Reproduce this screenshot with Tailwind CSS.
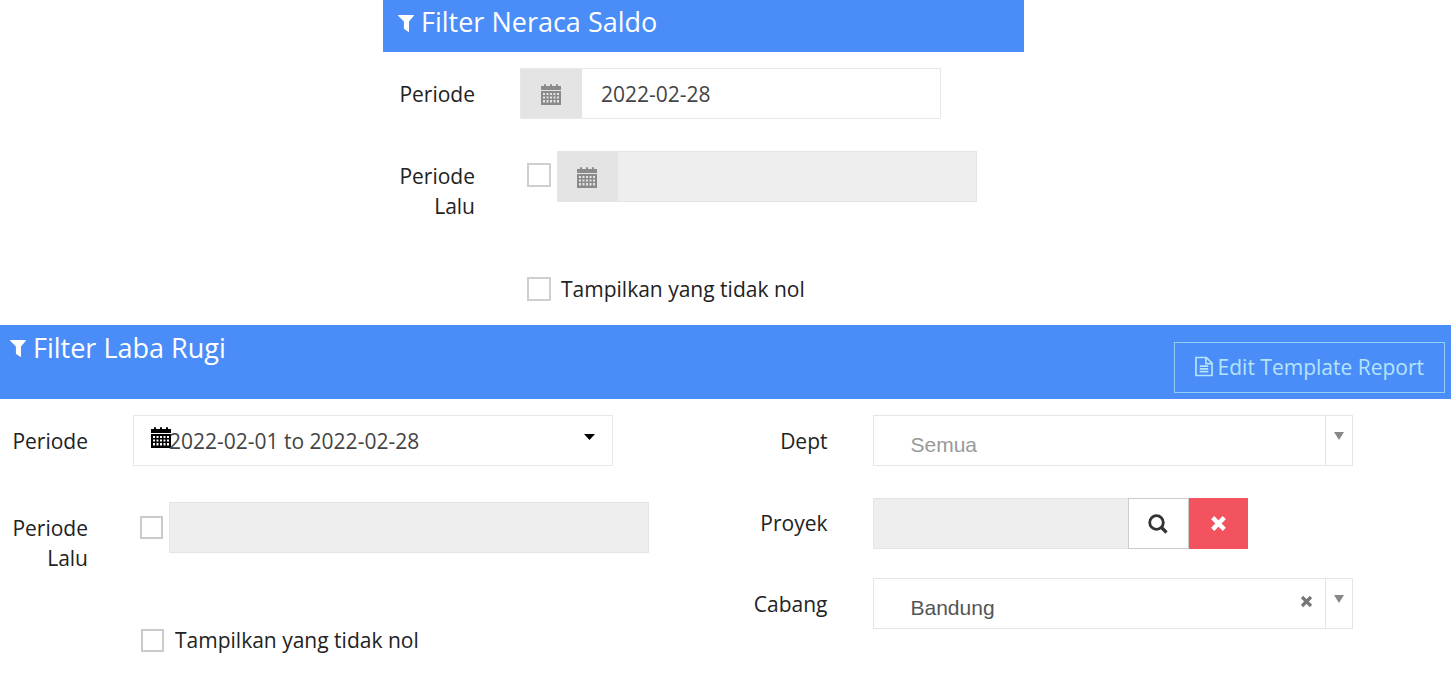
<!DOCTYPE html>
<html lang="id">
<head>
<meta charset="utf-8">
<meta name="viewport" content="width=device-width, initial-scale=1">
<title>Filter Laporan</title>
<script src="https://cdn.jsdelivr.net/npm/@tailwindcss/browser@4"></script>
</head>
<body class="bg-white font-['Open_Sans',sans-serif] text-[21px] leading-[30px] text-[#222]">
<svg class="hidden" aria-hidden="true">
  <symbol id="funnel" viewBox="0 0 16 17"><path d="M.3 0h15.4c.4 0 .5.5.2.8L11 6.500v10c0 .5-.5.6-.8.3l-4-2.900c-.2-.2-.3-.4-.3-.7V6.500L.1.8C-.2.5-.1 0 .3 0z" fill="currentColor"/></symbol>
  <symbol id="calendar" viewBox="0 0 20 21"><path fill="currentColor" fill-rule="evenodd" d="M0 2h3V1q0-1 1-1t1 1v1h4V1q0-1 1-1t1 1v1h4V1q0-1 1-1t1 1v1h3v4H0zM0 7h20v14H0zM2 9v2h2V9zm3.500 0v2h2V9zM9 9v2h2V9zm3.500 0v2h2V9zM16 9v2h2V9zM2 12.500v2h2v-2zm3.500 0v2h2v-2zm3.500 0v2h2v-2zm3.500 0v2h2v-2zm3.500 0v2h2v-2zM2 16v2.500h2V16zm3.500 0v2.500h2V16zM9 16v2.500h2V16zm3.500 0v2.500h2V16zm3.500 0v2.500h2V16z"/></symbol>
  <symbol id="cross" viewBox="0 0 16 16"><path d="M3.500 3.500l9 9M12.500 3.500l-9 9" fill="none" stroke="currentColor" stroke-width="4.800" stroke-linecap="square"/></symbol>
</svg>

<section class="ml-[383px] h-[325px] max-w-[641px]">
  <header class="flex h-[52px] items-start bg-[#4a8df8] pl-[15px] text-white">
    <h1 class="flex h-[44px] items-center gap-[7px] text-[27px] leading-[36px]">
      <svg class="mt-[2px] h-[17px] w-[16px]"><use href="#funnel"/></svg>Filter Neraca Saldo
    </h1>
  </header>
  <form class="pt-4">
    <div class="flex items-start gap-[45px]">
      <label for="n-periode" class="w-[92px] shrink-0 pt-[11px] text-right">Periode</label>
      <div class="flex h-[51px] w-[421px] border border-[#e8e8e8]">
        <span class="flex w-[61px] shrink-0 items-center justify-center bg-[#e4e4e4] pt-[2px] pr-[2px] text-[#8a8a8a]"><svg class="h-[21px] w-[20px]"><use href="#calendar"/></svg></span>
        <input id="n-periode" type="text" value="2022-02-28" class="min-w-0 flex-1 pl-[19px] text-[#444] outline-none">
      </div>
    </div>
    <div class="mt-8 flex items-start gap-[45px]">
      <label for="n-lalu" class="w-[92px] shrink-0 pt-[10px] text-right">Periode Lalu</label>
      <div class="flex items-start">
        <input type="checkbox" aria-label="Aktifkan periode lalu" class="mt-[12px] mr-[6px] ml-[7px] size-[24px] shrink-0 appearance-none border-2 border-[#cfcfcf] bg-white">
        <div class="flex h-[51px] w-[420px] border border-[#e4e4e4] bg-[#eee]">
          <span class="flex w-[60px] shrink-0 items-center justify-center bg-[#e4e4e4] pt-[2px] pr-[2px] text-[#8a8a8a]"><svg class="h-[21px] w-[20px]"><use href="#calendar"/></svg></span>
          <input id="n-lalu" type="text" disabled class="min-w-0 flex-1 pl-[19px]">
        </div>
      </div>
    </div>
    <div class="mt-[53px] flex items-center pl-[144px]">
      <input id="n-nol" type="checkbox" class="size-[24px] shrink-0 appearance-none border-2 border-[#cfcfcf] bg-white">
      <label for="n-nol" class="ml-[10px]">Tampilkan yang tidak nol</label>
    </div>
  </form>
</section>

<section>
  <header class="flex h-[74px] items-start justify-between bg-[#4a8df8] pr-[6px] pl-[10px] text-white">
    <h2 class="flex h-[45px] items-center gap-[7px] text-[27px] leading-[36px]">
      <svg class="mt-[2px] h-[17px] w-[16px]"><use href="#funnel"/></svg>Filter Laba Rugi
    </h2>
    <button type="button" class="mt-[17px] flex h-[51px] items-center gap-[5px] border border-[#8fcffb] px-5 pb-[2px] text-[#b5e4fb]">
      <svg class="h-[21px] w-[18px]" viewBox="0 0 19 21" fill="none" stroke="currentColor" stroke-width="1.800"><path d="M1 1h11l6 6v13H1zM11.500 1v6.500H18M5 10h9M5 13h9M5 16h9"/></svg>Edit Template Report
    </button>
  </header>
  <form class="grid grid-cols-2 pt-4">
    <div>
      <div class="flex items-start gap-[45px]">
        <label for="l-periode" class="w-[88px] shrink-0 pt-[11px] text-right">Periode</label>
        <button id="l-periode" type="button" class="flex h-[51px] w-[480px] items-center border border-[#e8e8e8] pr-[17px] pl-[17px] text-[#444]">
          <svg class="mb-[6px] h-[21px] w-[20px] text-black"><use href="#calendar"/></svg>
          <span class="-ml-[2px]">2022-02-01 to 2022-02-28</span>
          <svg class="mb-[8px] ml-auto h-[6px] w-[11px] text-black" viewBox="0 0 11 6"><path d="M0 0h11L5.500 6z" fill="currentColor"/></svg>
        </button>
      </div>
      <div class="mt-9 flex items-start gap-[45px]">
        <label for="l-lalu" class="w-[88px] shrink-0 pt-[11px] text-right">Periode Lalu</label>
        <div class="flex items-center">
          <input type="checkbox" aria-label="Aktifkan periode lalu" class="mr-[6px] ml-[7px] size-[23px] shrink-0 appearance-none border-2 border-[#cbcbcb] bg-white">
          <input id="l-lalu" type="text" disabled class="h-[51px] w-[480px] border border-[#e4e4e4] bg-[#eee] px-4">
        </div>
      </div>
      <div class="mt-[52px] flex items-center pl-[141px]">
        <input id="l-nol" type="checkbox" class="size-[23px] shrink-0 appearance-none border-2 border-[#cbcbcb] bg-white">
        <label for="l-nol" class="ml-[11px]">Tampilkan yang tidak nol</label>
      </div>
    </div>

    <div>
      <div class="flex items-start gap-[45px]">
        <label for="dept" class="w-[102px] shrink-0 pt-[11px] text-right">Dept</label>
        <div class="relative h-[51px] w-[480px]">
          <select id="dept" class="h-full w-full appearance-none border border-[#e5e5e5] bg-white pt-[8px] pl-[37px] font-['Liberation_Sans',sans-serif] text-[21px] text-[#999]"><option>Semua</option></select>
          <span class="pointer-events-none absolute inset-y-0 right-0 flex w-[28px] justify-center border-l border-[#e5e5e5] pt-[17px]"><svg class="h-[8px] w-[10px]" viewBox="0 0 10 8"><path d="M0 0h10L5 8z" fill="#888"/></svg></span>
        </div>
      </div>
      <div class="mt-8 flex items-start gap-[45px]">
        <label for="proyek" class="w-[102px] shrink-0 pt-[10px] text-right">Proyek</label>
        <div class="flex h-[51px] w-[375px]">
          <input id="proyek" type="text" disabled class="min-w-0 flex-1 border border-r-0 border-[#e4e4e4] bg-[#eee] px-4">
          <button type="button" aria-label="Cari" class="flex w-[61px] items-center justify-center border border-[#ccc] bg-white text-[#333]"><svg class="size-[20px]" viewBox="0 0 20 20" fill="none" stroke="currentColor" stroke-width="2.800"><circle cx="8.500" cy="8.500" r="6.800"/><path d="M13 13l5.500 5.500" stroke-width="3.200"/></svg></button>
          <button type="button" aria-label="Hapus" class="flex w-[59px] items-center justify-center bg-[#f2535f] text-white"><svg class="size-[15px]"><use href="#cross"/></svg></button>
        </div>
      </div>
      <div class="mt-[29px] flex items-start gap-[45px]">
        <label for="cabang" class="w-[102px] shrink-0 pt-[11px] text-right">Cabang</label>
        <div class="relative h-[51px] w-[480px]">
          <select id="cabang" class="h-full w-full appearance-none border border-[#e5e5e5] bg-white pt-[8px] pl-[37px] font-['Liberation_Sans',sans-serif] text-[21px] text-[#555]"><option>Bandung</option></select>
          <button type="button" aria-label="Kosongkan cabang" class="absolute top-[17px] right-[40px] text-[#777]"><svg class="size-[13px]" viewBox="0 0 13 13"><path d="M2 2l9 9M11 2l-9 9" stroke="currentColor" stroke-width="3.200"/></svg></button>
          <span class="pointer-events-none absolute inset-y-0 right-0 flex w-[28px] justify-center border-l border-[#e5e5e5] pt-[17px]"><svg class="h-[8px] w-[10px]" viewBox="0 0 10 8"><path d="M0 0h10L5 8z" fill="#888"/></svg></span>
        </div>
      </div>
    </div>
  </form>
</section>
</body>
</html>
